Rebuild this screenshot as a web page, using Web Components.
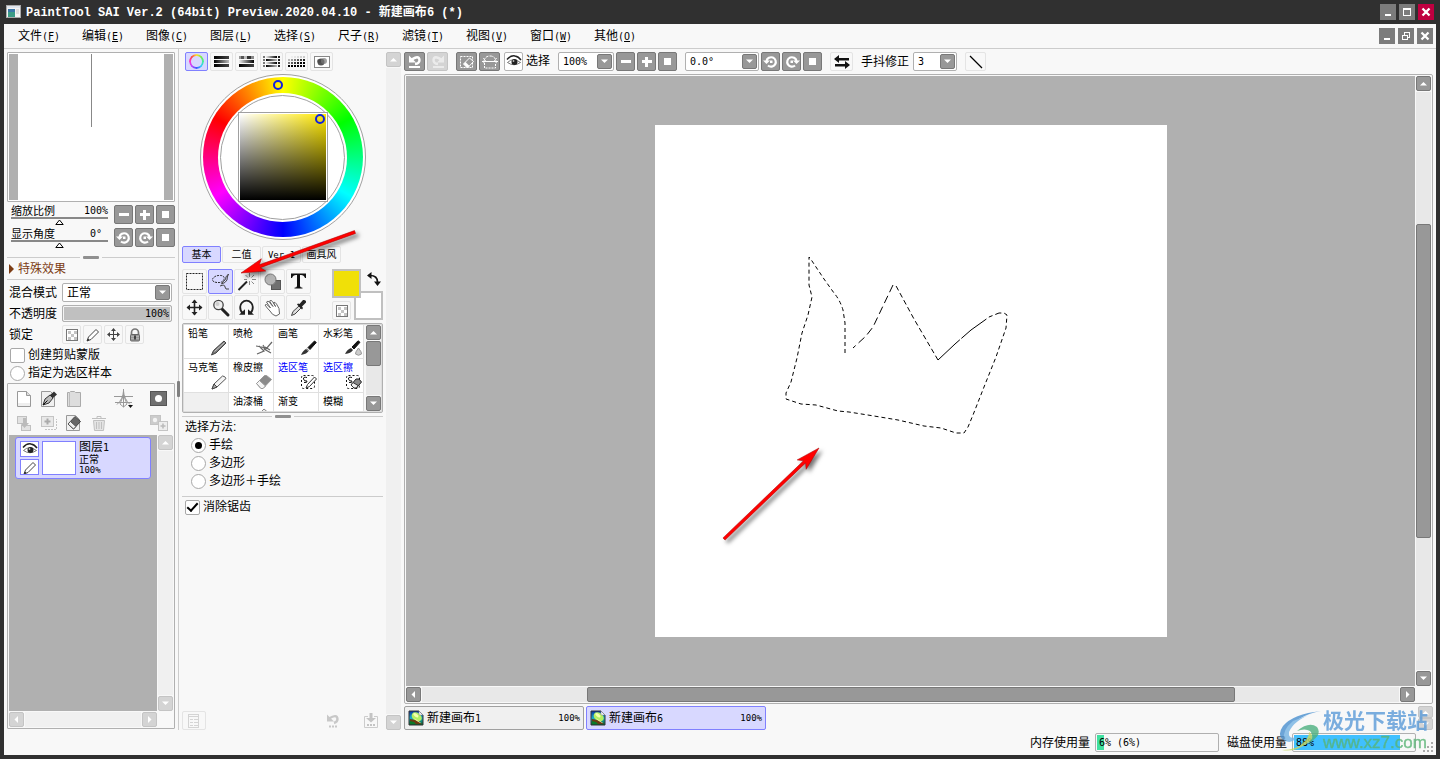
<!DOCTYPE html>
<html lang="zh-CN">
<head>
<meta charset="utf-8">
<title>PaintTool SAI</title>
<style>
html,body{margin:0;height:100%}
body{background:#303030;color:#000;font:12px/18px "Liberation Sans","Noto Sans CJK SC",sans-serif;overflow:hidden}
</style>
</head>
<body>
<sai-window>
  <sai-menu slot="menu"></sai-menu>
  <sai-left slot="left"></sai-left>
  <sai-tools slot="tools"></sai-tools>
  <sai-workspace slot="work"></sai-workspace>
  <sai-status slot="status"></sai-status>
</sai-window>
<script>
const BASE = `
*{box-sizing:border-box}
button,input,select{font:inherit;color:inherit;margin:0;padding:0}
button{background:none;border:0}
.n{font-family:"DejaVu Sans Mono",monospace;font-size:10px}
.s{font-family:"DejaVu Sans Mono",monospace;font-size:9px}
.opt{display:flex;align-items:center;gap:3px;height:18px;white-space:nowrap}
.opt input{appearance:none;width:15px;height:15px;border:1px solid #a8a8a8;background:#fff;display:grid;place-items:center;border-radius:2px}
.opt input[type=radio]{border-radius:50%}
.opt input[type=radio]:checked::after{content:"";width:7px;height:7px;border-radius:50%;background:#000}
.opt input[type=checkbox]:checked::after{content:"";width:9px;height:4px;border:solid #000;border-width:0 0 2px 2px;transform:rotate(-48deg);margin-bottom:3px}
`;
function define(name, css, view){
  customElements.define(name, class extends HTMLElement{
    constructor(){ super(); this.attachShadow({mode:'open'}); }
    connectedCallback(){
      this.shadowRoot.innerHTML = `<style>${BASE}${css}</style>` + view(this);
    }
  });
}
const rects = (list, fill) => list.map(([x,y,w,h]) => `<rect x="${x}" y="${y}" width="${w}" height="${h}" fill="${fill}"/>`).join('');
const dots = (op) => { let s=''; for(let r=0;r<4;r++) for(let c=0;c<6;c++) s+=`<rect x="${c*3}" y="${r*3+1}" width="2" height="2" fill="#000" opacity="${op(r,c)}"/>`; return s; };
const grad = '<defs><linearGradient id="a"><stop stop-color="#000"/><stop offset="1" stop-color="#444"/></linearGradient><linearGradient id="b"><stop stop-color="#000"/><stop offset="1" stop-color="#bbb"/></linearGradient><linearGradient id="c"><stop stop-color="#eee"/><stop offset="1" stop-color="#000"/></linearGradient></defs>';
const checker = '<g shape-rendering="crispEdges"><rect x="2.5" y="2.5" width="11" height="11" fill="#fff" stroke="#777"/><path d="M4 4h3v3H4zM10 4h3v3h-3zM7 7h3v3H7zM4 10h3v3H4zM10 10h3v3h-3z" fill="#c4c4c4"/></g>';
const pen = (c='#fff') => `<path d="M2 14l1.5-4L11 2.500l2.500 2.500L6 12.500z" fill="${c}" stroke="#444"/><path d="M2 14l1-2.500 1.500 1.500z" fill="#222"/>`;
const eye = '<path d="M1 5.500Q5 1 9 2Q12.500 2.500 15 6" fill="none" stroke="#222" stroke-width="1.500"/><path d="M1.500 8.500Q7 3 14.500 8.500Q8 13 1.500 8.500z" fill="#fff" stroke="#555" stroke-width=".8"/><circle cx="8.500" cy="8" r="3" fill="#222"/><circle cx="7.500" cy="7" r=".9" fill="#bbb"/>';
const sel = '<rect x="1.500" y="1.500" width="13" height="13" rx="2" fill="none" stroke="#111" stroke-dasharray="2 2"/><path d="M7 3.500Q3 2.500 3.500 5T7 7Q7.500 9 4 8.500" fill="none" stroke="#111"/>';
const thumb = '<defs><linearGradient id="s" x2="0" y2="1"><stop stop-color="#0a2aa0"/><stop offset=".5" stop-color="#19aecb"/><stop offset="1" stop-color="#0a5d20"/></linearGradient></defs><path d="M1 1h10l4 4v10H1z" fill="url(#s)" stroke="#333"/><ellipse cx="8.500" cy="6.500" rx="5.500" ry="4" transform="rotate(35 8 7)" fill="#b4ef62"/><ellipse cx="7.500" cy="5.500" rx="3" ry="1.500" transform="rotate(35 8 6)" fill="#f4ffb0"/><path d="M6 8l7 5-2 1z" fill="#fff5b0"/><path d="M2 9l5 1 7 4H2z" fill="#6a3a12"/><path d="M2 11l4 1 2 2H2z" fill="#0a7a28"/><path d="M11 1v4h4z" fill="#eef" stroke="#888" stroke-width=".5"/>';
const page = (f='#fff') => `<path d="M1.500.5h9l4 4v11h-13z" fill="${f}" stroke="#999"/>`;
const ICONS = {
  minus:[16,16,rects([[3,6,10,3]],'#fff')],
  plus:[16,16,rects([[3,6,10,3],[6,3,3,10]],'#fff')],
  stop:[16,16,rects([[4,4,7,7]],'#fff')],
  ccw:[16,16,'<path d="M3.500 7A4.700 4.700 0 1 1 5 11.500" fill="none" stroke="#fff" stroke-width="2.200"/><path d="M0 6.500h7L3.500 10z" fill="#fff"/><rect x="7" y="6.500" width="2.500" height="2.500" fill="#fff"/>'],
  cw:[16,16,'<path d="M12.500 7A4.700 4.700 0 1 0 11 11.500" fill="none" stroke="#fff" stroke-width="2.200"/><path d="M9 6.500h7L12.500 10z" fill="#fff"/><rect x="6.500" y="6.500" width="2.500" height="2.500" fill="#fff"/>'],
  undo:[16,16,'<path d="M4 6Q12 .5 12.500 6Q12.500 9.500 8 10" fill="none" stroke="#fff" stroke-width="2.400"/><path d="M2 1.500v7h7z" fill="#fff"/><path d="M2 13h11" stroke="#fff" stroke-width="2"/>'],
  redo:[16,16,'<g opacity=".55"><path d="M12 6Q4 .5 3.500 6Q3.500 9.500 8 10" fill="none" stroke="#fff" stroke-width="2.400"/><path d="M14 1.500v7H7z" fill="#fff"/><path d="M3 13h11" stroke="#fff" stroke-width="2"/></g>'],
  desel:[16,16,'<rect x="1.500" y="2.500" width="12" height="11" fill="none" stroke="#fff" stroke-dasharray="2 1"/><path d="M4.500 10l6-6 4 3.500-6 6.500z" fill="#989898" stroke="#fff"/><path d="M4.500 10l2-2 4 4-2 2z" fill="#fff"/>'],
  invsel:[16,16,'<path d="M2 7Q3 2 8 2T14 7" fill="none" stroke="#fff" stroke-dasharray="3 1"/><path d="M0 7.500h16" stroke="#fff"/><path d="M2.500 9v5h11V9" fill="none" stroke="#fff" stroke-dasharray="2 1"/><path d="M1 4l3 3-3 2M15 4l-3 3 3 2" fill="none" stroke="#fff" stroke-width=".7"/>'],
  eye:[16,16,eye],
  swap:[16,16,'<path d="M0 5l5-4v3h10v2.500H5V9zM16 11l-5-4v3H1v2.500h10V15z" fill="#111"/>'],
  line:[16,16,'<path d="M2 2l12 12" stroke="#000" stroke-width="1.200"/>'],
  up:[9,5,'<path d="M1 4.500L4.500 1 8 4.500z" fill="#fff"/>'],
  down:[9,5,'<path d="M1 .5L4.500 4 8 .5z" fill="#fff"/>'],
  left:[5,9,'<path d="M4 1L.5 4.500 4 8z" fill="#fff"/>'],
  right:[5,9,'<path d="M1 1l3.500 3.500L1 8z" fill="#fff"/>'],
  min:[16,16,rects([[5,10,6,2]],'#fff')],
  max:[16,16,'<g shape-rendering="crispEdges"><rect x="4.500" y="4.500" width="7" height="7" fill="none" stroke="#fff"/><rect x="4" y="4" width="8" height="2" fill="#fff"/></g>'],
  restore:[16,16,'<g shape-rendering="crispEdges" fill="none" stroke="#fff"><path d="M6.500 7V4.500h5v5H9"/><path d="M4.500 7.500h5v4h-5z"/><path d="M4 7.500h6M6 4.500h6"/></g>'],
  close:[16,16,'<path d="M4.500 4.500l7 7M11.500 4.500l-7 7" stroke="#fff" stroke-width="2.300"/>'],
  app:[16,14,'<rect x=".5" y=".5" width="14" height="12" fill="#f4f4f4" stroke="#aaa"/><rect x="1" y="1" width="13" height="2" fill="#dfe6ee"/><rect x="2" y="4" width="7" height="8" fill="#3c9c86"/><path d="M2 4h7v3H2z" fill="#3a78a8"/><rect x="10" y="4" width="3" height="5" fill="#ddd"/>'],
  bars:[16,12,grad+'<rect width="15" height="3" fill="url(#a)"/><rect y="4" width="15" height="3" fill="url(#b)"/><rect y="8" width="15" height="3" fill="url(#a)"/>'],
  mixbars:[16,12,grad+'<rect width="2" height="3" fill="#999"/><rect x="2" width="3" height="3" fill="#555"/><rect x="5" width="3" height="3" fill="#bbb"/><rect x="8" width="4" height="3" fill="#333"/><rect x="12" width="3" height="3" fill="#888"/><rect y="4" width="15" height="3" fill="url(#c)"/><rect y="8" width="15" height="3" fill="url(#a)"/>'],
  dotbars:[18,12,grad+[0,3,6,9].map(y=>`<rect y="${y}" width="2" height="2" fill="#777"/><rect x="3" y="${y}" width="11" height="2" fill="url(#${y%6?'b':'c'})"/><rect x="15" y="${y}" width="2" height="2" fill="#222"/>`).join('')],
  dots:[18,13,dots((r,c)=>Math.min(1,(r*2+c*(r?1:.3)+(r==3?5:0))/8))],
  pad:[16,14,'<rect x=".5" y="1.500" width="15" height="11" fill="#fff" stroke="#888"/><circle cx="7" cy="7" r="3.500" fill="#555"/><circle cx="10" cy="6" r="3" fill="#777" opacity=".7"/><circle cx="5" cy="6" r="2" fill="#444" opacity=".6"/>'],
  marquee:[20,20,'<rect x="1.500" y="1.500" width="16" height="16" fill="none" stroke="#222" stroke-dasharray="2 1"/>'],
  lasso:[20,20,'<path d="M6 10.500Q1 10 1.500 7Q4 3 10 3.500Q14 4 13 7.500Q11 11 7 10.500" fill="none" stroke="#222" stroke-dasharray="2 1"/><path d="M17.500 2Q14 5 14.500 7.500Q12 9.500 10.500 12Q14.500 11 16 8Q16 5 17.500 2M9 14Q14 12 14 15T18 17" fill="none" stroke="#444"/>'],
  wand:[20,20,'<path d="M1.500 18L10 9.500" stroke="#222" stroke-width="2"/><path d="M12.500 1v4M12.500 9v4M7 7.500h3M15 7.500h4M8.500 3l2.500 2.500M17 3L14.500 5.500M17 12L14.500 9.500" stroke="#888"/>'],
  shapes:[20,20,'<rect x="8.500" y="8.500" width="9" height="9" fill="#707070" stroke="#555"/><circle cx="7.500" cy="7.500" r="5.500" fill="#b4b4b4" stroke="#777"/>'],
  type:[20,20,'<path d="M2 1.500h15V6h-1Q15 3 12 3h-1v11q0 1.500 2.500 1.800v.7H5.500v-.7q2.500-.3 2.500-1.800V3H7Q4 3 3 6H2z" fill="#111"/>'],
  move:[19,19,'<path d="M9.500 2.500v14M2.500 9.500h14" stroke="#222" stroke-width="1.600"/><path d="M9.500 1.500l3 3.500h-6zM9.500 17.500l3-3.500h-6zM1.500 9.500L5 6.500v6zM17.500 9.500L14 6.500v6z" fill="#222"/>'],
  zoom:[20,20,'<path d="M11 11l6 6" stroke="#222" stroke-width="3" stroke-linecap="round"/><circle cx="7.500" cy="7" r="4.700" fill="#eee" stroke="#444" stroke-width="1.300"/><circle cx="6.500" cy="6" r="2" fill="#ccc"/>'],
  rotate:[20,20,'<path d="M6 15.500Q3 13 3.200 9A6.300 6.300 0 0 1 15.800 9Q16 13 13 15.500" fill="none" stroke="#222" stroke-width="1.800"/><path d="M2 16.800h6v-5.500zM17 16.800h-6v-5.500z" fill="#222"/>'],
  hand:[20,20,'<path d="M7 13Q4 10 2 7Q3.500 5.500 5.500 8L7.500 10L3.500 4Q5 2 6.500 4.500L10 8.500L6.500 3Q8 1.500 9.500 3.500L12.500 8.500L10.500 4.500Q12 3.500 13.500 6Q17 10 16.500 16L13 18Q9 17 7 13z" fill="#fff" stroke="#666"/>'],
  picker:[20,20,'<path d="M2.500 17.500l1.500-4 6-5.500 2 2-6 6z" fill="#ddd" stroke="#444"/><path d="M8 6.500l5 5 1-1.500-1-1.500 4-4q.5-3-3-2.500L10.500 6 9 5.500z" fill="#222"/>'],
  swapc:[16,16,'<path d="M4 4.500Q11.500 4.500 11.500 11" fill="none" stroke="#111" stroke-width="1.700"/><path d="M1 4.500L5.500 1v7zM11.500 15L8 10.500h7z" fill="#111"/>'],
  checker:[16,16,checker],
  pencilline:[16,16,pen()],
  movesm:[15,15,'<path d="M7.500 2v11M2 7.500h11" stroke="#444"/><path d="M7.500 1l2.500 3H5zM7.500 14l2.500-3H5zM1 7.500L4 5v5zM14 7.500L11 5v5z" fill="#444"/>'],
  lock:[16,16,'<path d="M4.500 8V5.500a3.500 3.500 0 0 1 7 0V8" fill="none" stroke="#777" stroke-width="1.700"/><rect x="3.500" y="7.500" width="9" height="6.500" rx="1" fill="#999" stroke="#666"/><path d="M4 9.500h8M4 11.500h8" stroke="#bbb" stroke-width=".7"/><path d="M8 8.500v4" stroke="#222" stroke-width="1.500"/>'],
  newlayer:[16,16,page()+'<path d="M10.500.5v4h4" fill="#ddd" stroke="#999"/><path d="M2 12h12v3H2z" fill="#ddd" opacity=".5"/>'],
  penlayer:[18,16,page('#f0f0f0')+'<path d="M3 14l2-6 5-4 3 3-4 5z" fill="#bbb" stroke="#333"/><path d="M3 14l4.500-4.500" stroke="#111"/><path d="M10 4l4-3.500 3 3-4 3.500z" fill="#333"/>'],
  folder:[16,16,'<path d="M1.500 1.500h2l1-1h4l1 1h5v14h-13z" fill="#ddd" stroke="#aaa"/><path d="M3.500 2v13" stroke="#bbb"/>'],
  ruler:[20,20,'<path d="M9.500 0v18M0 7.500h19M1 13.500h17M3 15.500Q9 10 9.500 2Q10 10 16 15.500M6 15l3.500-9 3.500 9-3.500 3z" fill="none" stroke="#999"/><path d="M14 16h5l-2.500 3z" fill="#111"/>'],
  mask:[18,16,'<rect x=".5" y=".5" width="16" height="14" fill="#707070" stroke="#555"/><circle cx="8.500" cy="7.500" r="3.500" fill="#fff"/>'],
  merge:[16,16,'<g fill="#e2e2e2" stroke="#c0c0c0"><rect x="1.500" y="1.500" width="9" height="7"/><rect x="5.500" y="10.500" width="9" height="5"/></g><path d="M7 3h3v5h3L8.500 13 4 8h3z" fill="#bbb"/>'],
  stamp:[18,16,'<g fill="none" stroke="#c4c4c4"><path d="M5 14.500h11.500V4" stroke-dasharray="2 1"/><rect x="1.500" y="1.500" width="12" height="10" fill="#e8e8e8"/></g><path d="M7.500 3.500v6M4.500 6.500h6" stroke="#aaa" stroke-width="2"/>'],
  clear:[18,16,page('#f0f0f0')+'<path d="M3 9l7-7.500 5.500 5-7 7.500z" fill="#666" stroke="#444"/><path d="M3 9l2.500-2.500 5.500 5-2.500 2.500z" fill="#eee" stroke="#555"/>'],
  trash:[16,16,'<path d="M2.500 5.500h11l-1 10h-9z" fill="#e4e4e4" stroke="#c0c0c0"/><path d="M1 3.500h14M6 3V1.500h4V3M5.500 7v7M8 7v7M10.500 7v7" fill="none" stroke="#c0c0c0"/>'],
  maskadd:[20,16,'<rect x="1.500" y=".5" width="10" height="9" fill="#ccc" stroke="#c4c4c4"/><circle cx="6" cy="5" r="2.200" fill="#f4f4f4"/><rect x="9.500" y="6.500" width="9" height="9" fill="#eee" stroke="#c4c4c4"/><path d="M14 8.500v5M11.500 11h5" stroke="#bbb" stroke-width="1.600"/>'],
  b_pencil:[18,16,'<path d="M1.500 15l2-4.500L14 1l2 2L6 13z" fill="#777" stroke="#444"/><path d="M4.500 11.500L14.500 2.500" stroke="#ccc"/>'],
  b_air:[18,16,'<path d="M1 6l6 1 4 2 6-7M9 9l7 4M4 6l5 5-7 3M10 7l5 3M8 5l3 5" fill="none" stroke="#666" stroke-width="1.200"/>'],
  b_brush:[18,16,'<path d="M8 7.500L14.500 1l1.800 1.500L10 9.500z" fill="#111" stroke="#111"/><path d="M1 15Q3 10 7 8.500l2 2Q7 14 1 15z" fill="#333"/><path d="M6.500 9l2.500 2.500" stroke="#ccc"/>'],
  b_water:[18,16,'<path d="M7 7L13 .8l2 1.500L9 9z" fill="#111" stroke="#111"/><path d="M0 14Q2 9.500 6 8l2 2Q6 13.500 0 14z" fill="#333"/><path d="M13.500 8Q10 12.500 10.500 14Q13.500 16.500 16.500 14Q17 12.500 13.500 8z" fill="#ccc" stroke="#999"/>'],
  b_marker:[18,16,'<path d="M2 15l2-5L12.500 2q2.500 0 3.500 2.500L7 13z" fill="#f4f4f4" stroke="#555"/><path d="M2 15l2-5 3 3z" fill="#aaa" stroke="#444"/>'],
  b_eraser:[18,16,'<path d="M1.500 9.500l8-8h2l5 4-8.500 9H6z" fill="#8a8a8a" stroke="#999"/><path d="M1.500 9.500l3-3 6 5.500-2.500 2.500H6z" fill="#f4f4f4" stroke="#999"/>'],
  b_selpen:[18,16,sel+'<path d="M6 14l1.500-3.500L14.500 3l2 2-7 7.500z" fill="#fff" stroke="#333"/>'],
  b_seler:[18,16,sel+'<path d="M6 11l5-6h3l2.500 3-5 6H9z" fill="#888" stroke="#222"/><path d="M6 11l2-2.500 5 3L11.500 14H9z" fill="#eee" stroke="#333"/>'],
  b_bucket:[18,16,'<path d="M9 1l7 6-7 6-6-6z" fill="#eee" stroke="#888"/>'],
  b_dot:[18,16,'<path d="M12 3v3" stroke="#aaa"/>'],
  list:[18,16,'<g fill="none" stroke="#d4d4d4"><rect x="3.500" y="1.500" width="10" height="13"/><path d="M3 3.500h11M5 6.500h3M9 6.500h4M5 9.500h3M9 9.500h4M5 12.500h3M9 12.500h4"/></g>'],
  undodots:[16,16,'<path d="M4 5.500Q12 .5 12.500 6Q12.500 9 9 10" fill="none" stroke="#c8c8c8" stroke-width="2.400"/><path d="M2 1.500v7h7zM4 12.500h2v2H4zM7 12.500h2v2H7zM10 12.500h2v2h-2z" fill="#c8c8c8"/>'],
  savedots:[16,16,'<path d="M5 3.500H1.500v11h13v-11H11" fill="none" stroke="#ccc"/><path d="M6.500 0h3v5H13L8 9.500 3 5h3.500zM4 11h2v2H4zM7 11h2v2H7zM10 11h2v2h-2z" fill="#c4c4c4"/>'],
  thumb:[16,16,thumb]
};

define('sai-icon', ':host{display:inline-flex}svg,i{display:block}i{width:15px;height:15px;border-radius:50%;background:conic-gradient(#fd3,#7e4,#4e9,#3cf,#45f,#b4f,#f3c,#f44,#fd3);-webkit-mask:radial-gradient(circle,#0000 5px,#000 6px)}', el => {
  const name = el.getAttribute('name');
  if(name === 'wheel') return '<i></i>';
  const [w,h,body] = ICONS[name];
  return `<svg width="${w}" height="${h}" viewBox="0 0 ${w} ${h}" aria-hidden="true">${body}</svg>`;
});

define('sai-button', `
:host{display:block;width:var(--w,19px);height:var(--h,19px);flex:none}
button{width:100%;height:100%;display:grid;place-items:center;border-radius:2px;border:1px solid #e4e4e4;background:#f8f8f8;font-size:10px;line-height:12px;overflow:hidden;white-space:nowrap}
:host([kind=dark]) button{background:#989898;border:1px solid #787878}
:host([kind=pale]) button{background:#d4d4d4;border-color:#c4c4c4}
:host([kind=on]) button{background:#d8d8ff;border:1px solid #8080ff}
:host([kind=line]) button{background:#fff;border-color:#b4b4b4}
:host([kind=blue]) button{background:#fff;border-color:#8080ff;border-radius:0}
:host([kind=bare]) button{border:0;background:none}
:host([kind=win]) button{border:0;border-radius:0;background:#7c7c7c}
:host([kind=red]) button{border:0;border-radius:0;background:#c00040}
`, el => `<button type="button" aria-label="${el.getAttribute('label')||el.getAttribute('icon')||''}">${el.hasAttribute('icon')?`<sai-icon name="${el.getAttribute('icon')}"></sai-icon>`:'<span><slot></slot></span>'}</button>`);

define('sai-select', `
:host{display:flex;align-items:center}
label{flex:none;width:var(--lw,auto);white-space:nowrap}
.box{position:relative;flex:1;width:var(--bw,auto);height:19px}
select{appearance:none;width:100%;height:19px;border:1px solid #b0b0b0;border-radius:2px;background:#fff;padding:0 18px 0 4px;display:block;outline:0}
.b{position:absolute;right:2px;top:2px;width:15px;height:15px;background:#989898;border:1px solid #787878;border-radius:2px;display:grid;place-items:center;pointer-events:none}
`, el => `<label for="s"><slot></slot></label><div class="box"><select id="s" class="${el.getAttribute('face')||''}" aria-label="${el.getAttribute('label')||el.textContent}"><option>${el.getAttribute('value')}</option></select><span class="b"><sai-icon name="down"></sai-icon></span></div>`);

define('sai-scroll', `
:host{display:flex;min-width:0;min-height:0;gap:1px}
:host([dir=v]){flex-direction:column;width:15px}
:host([dir=h]){height:15px}
.t{flex:1;display:flex;flex-direction:inherit;background:#e8e8e8;min-width:0;min-height:0}
:host([pale]) .t{background:#f0f0f0}
.t b{background:#989898;border:1px solid #787878;border-radius:2px}
sai-button{--w:15px;--h:15px}
`, el => {
  const v = el.getAttribute('dir') === 'v', k = el.hasAttribute('pale') ? 'pale' : 'dark';
  const p = (el.getAttribute('parts')||'').split(' ');
  const body = p.length === 3 ? `<span style="flex:${p[0]}"></span><b style="flex:${p[1]}"></b><span style="flex:${p[2]}"></span>` : '';
  return `<sai-button kind="${k}" icon="${v?'up':'left'}"></sai-button><div class="t">${body}</div><sai-button kind="${k}" icon="${v?'down':'right'}"></sai-button>`;
});

define('sai-divider', `
:host{display:flex;align-items:center;gap:3px;height:3px}
span{flex:1;height:1px;background:#ccc}
b{width:16px;height:3px;border-radius:1px;background:#909090}
:host([plain]){height:1px}
`, el => el.hasAttribute('plain') ? '<span></span>' : '<span></span><b></b><span></span>');

define('sai-slider', `
:host{display:block;width:97px;height:19px;font-size:11px;line-height:12px}
.r{display:flex;justify-content:space-between;height:12px}
output{padding-right:var(--pr,0)}
input{display:block;appearance:none;width:100%;height:8px;background:none}
input::-webkit-slider-runnable-track{height:8px;background:linear-gradient(#888 2px,transparent 2px)}
input::-webkit-slider-thumb{appearance:none;width:9px;height:6px;margin-top:2px;background:url("data:image/svg+xml,%3Csvg xmlns='http://www.w3.org/2000/svg' width='9' height='6'%3E%3Cpath d='M.8 5.500L4.500 1l3.700 4.500z' fill='white' stroke='black'/%3E%3C/svg%3E")}
`, el => `<div class="r"><label for="r"><slot></slot></label><output class="n">${el.getAttribute('value')}</output></div><input id="r" type="range" value="50">`);

define('sai-window', `
:host{display:flex;flex-direction:column;height:100vh;background:#303030;padding:0 4px 4px;box-sizing:border-box}
header{flex:none;height:24px;display:flex;align-items:center;gap:3px;padding:0 2px;color:#fff;font-weight:bold}
h1{margin:0;flex:1;font-size:12px;line-height:24px;padding-left:1px;white-space:nowrap}
h1 span{font-family:"Liberation Mono",monospace}
sai-button{--w:16px;--h:16px}
main{flex:1;display:flex;flex-direction:column;background:#f8f8f8;min-height:0}
.body{flex:1;display:flex;min-height:0}
`, () => `<header><sai-icon name="app"></sai-icon><h1><span>PaintTool SAI Ver.2 (64bit) Preview.2020.04.10 - </span>新建画布<span>6 (*)</span></h1>
<sai-button kind="win" icon="min"></sai-button><sai-button kind="win" icon="max"></sai-button><sai-button kind="red" icon="close"></sai-button></header>
<main><slot name="menu"></slot><div class="body"><slot name="left"></slot><slot name="tools"></slot><slot name="work"></slot></div><slot name="status"></slot></main>`);

define('sai-menu', `
:host{display:flex;flex:none;box-sizing:border-box;height:25px;border-bottom:1px solid #ccc;align-items:center;padding:0 3px 0 14px}
nav{flex:1;display:flex;gap:22px}
nav button{white-space:nowrap;width:42px;line-height:24px;padding-top:1px}
div{display:flex;gap:3px}
sai-button{--w:16px;--h:16px}
`, () => '<nav>' + [['文件','F'],['编辑','E'],['图像','C'],['图层','L'],['选择','S'],['尺子','R'],['滤镜','T'],['视图','V'],['窗口','W'],['其他','O']].map(([t,k])=>`<button type="button">${t}<span class="n">(<u>${k}</u>)</span></button>`).join('') + '</nav><div><sai-button kind="win" icon="min"></sai-button><sai-button kind="win" icon="restore"></sai-button><sai-button kind="win" icon="close"></sai-button></div>');

define('sai-left', `
:host{position:relative;flex:none;display:flex;flex-direction:column;width:175px;box-sizing:border-box;padding:3px 3px 1px;border-right:1px solid #ccc}
.grip{position:absolute;right:-2px;top:332px;width:3px;height:16px;border-radius:1px;background:#808080}
.nav{height:150px;flex:none;border:1px solid #b0b0b0;border-radius:1px;padding:1px;background:#fff}
.nav div{height:100%;border:solid #b0b0b0;border-width:0 9px;background:linear-gradient(#888,#888) 73px 0/1px 73px no-repeat #fff}
.zoom{display:flex;justify-content:space-between;padding-left:4px;margin-top:4px}
.zoom:first-of-type{margin-top:3px}
.btns{display:flex;gap:2px}
.hd{height:20px;line-height:19px;color:#7c3c14;display:flex;align-items:center;gap:4px;padding-left:2px}
.hd::before{content:"";border-left:5px solid #7c3c14;border-top:5px solid transparent;border-bottom:5px solid transparent}
.form{padding:3px 3px 0 2px;display:grid;gap:3px}
sai-select{--lw:53px}
.op{display:flex;height:17px;align-items:center}
.op>label,.lock>span{width:53px;white-space:nowrap}
.op div{position:relative;flex:1;height:17px}
.op input{appearance:none;display:block;width:100%;height:17px;border:1px solid #b0b0b0;border-radius:2px;background:#c0c0c0;box-shadow:inset 0 0 0 1px #f4f4f4}
.op input::-webkit-slider-thumb{appearance:none;width:1px;height:1px}
.op output{position:absolute;right:3px;top:0;line-height:17px}
.lock{display:flex;align-items:center}
.lock div{display:flex;gap:2px}
.checks{padding:2px 0 1px 3px}
.layers{flex:1;min-height:0;display:flex;flex-direction:column;border:1px solid #b0b0b0;border-radius:1px;padding:3px 1px 0}
.bar{display:grid;grid-template-columns:repeat(5,25px) 10px 25px;padding-left:2px;--w:25px;--h:24px}
.bar .e{grid-column:7}
.list{flex:1;min-height:0;display:grid;grid-template:minmax(0,1fr) 15px/minmax(0,1fr) 15px;gap:1px;padding-bottom:1px}
.items{background:#b0b0b0;padding:2px 6px}
.layer{height:42px;border:1px solid #8080ff;border-radius:3px;background:#d8d8ff;display:flex;gap:3px;padding:3px 4px}
.vis{display:grid;gap:2px;--h:16px}
.th{width:34px;height:34px;border:1px solid #8080ff;background:#fff}
.tx{line-height:11px;font-size:10px}
.tx div:first-child{font-size:12px;line-height:12px}
`, () => `<span class="grip"></span><div class="nav"><div></div></div>
<section class="zoom"><sai-slider value="100%">缩放比例</sai-slider><span class="btns"><sai-button kind="dark" icon="minus"></sai-button><sai-button kind="dark" icon="plus"></sai-button><sai-button kind="dark" icon="stop"></sai-button></span></section>
<section class="zoom"><sai-slider value="0°" style="--pr:6px">显示角度</sai-slider><span class="btns"><sai-button kind="dark" icon="ccw"></sai-button><sai-button kind="dark" icon="cw"></sai-button><sai-button kind="dark" icon="stop"></sai-button></span></section>
<sai-divider style="margin-top:9px"></sai-divider>
<div class="hd">特殊效果</div><sai-divider plain></sai-divider>
<div class="form"><sai-select value="正常">混合模式</sai-select>
<div class="op"><label for="op">不透明度</label><div><input id="op" type="range" value="100"><output class="n">100%</output></div></div>
<div class="lock"><span>锁定</span><div><sai-button icon="checker"></sai-button><sai-button icon="pencilline"></sai-button><sai-button icon="movesm"></sai-button><sai-button icon="lock"></sai-button></div></div></div>
<div class="checks"><label class="opt"><input type="checkbox">创建剪贴蒙版</label><label class="opt"><input type="radio">指定为选区样本</label></div>
<section class="layers"><div class="bar"><sai-button kind="bare" icon="newlayer"></sai-button><sai-button kind="bare" icon="penlayer"></sai-button><sai-button kind="bare" icon="folder"></sai-button><span></span><sai-button kind="bare" icon="ruler"></sai-button><sai-button class="e" kind="bare" icon="mask"></sai-button>
<sai-button kind="bare" icon="merge"></sai-button><sai-button kind="bare" icon="stamp"></sai-button><sai-button kind="bare" icon="clear"></sai-button><sai-button kind="bare" icon="trash"></sai-button><sai-button class="e" kind="bare" icon="maskadd"></sai-button></div>
<div class="list"><div class="items"><div class="layer"><div class="vis"><sai-button kind="blue" icon="eye"></sai-button><sai-button kind="blue" icon="pencilline"></sai-button></div><div class="th"></div><div class="tx"><div>图层<span class="n">1</span></div><div>正常</div><div class="s">100%</div></div></div></div>
<sai-scroll dir="v" pale></sai-scroll><sai-scroll dir="h" pale></sai-scroll></div></section>`);

define('sai-color-wheel', `
:host{display:grid;place-items:center;height:166px}
.o{position:relative;width:166px;height:166px;border-radius:50%;border:1px solid #a0a0a0;background:#fff;display:grid;place-items:center}
.h{width:160px;height:160px;border-radius:50%;background:conic-gradient(#ff0,#0f0 60deg,#0ff 120deg,#00f 180deg,#f0f 240deg,#f00 300deg,#ff0);display:grid;place-items:center}
.w{width:129px;height:129px;border-radius:50%;background:#fff;display:grid;place-items:center}
.i{width:125px;height:125px;border-radius:50%;border:1px solid #a0a0a0;display:grid;place-items:center}
.q{width:90px;height:90px;border:1px solid #a0a0a0;padding:1px;background:#fff}
.q div{height:100%;background:linear-gradient(transparent,#000),linear-gradient(90deg,#fff,#ffe800)}
b{position:absolute;width:10px;height:10px;border:2px solid #1020e0;border-radius:50%}
`, () => '<div class="o"><div class="h"><div class="w"><div class="i"><div class="q"><div></div></div></div></div></div><b style="left:72px;top:5px"></b><b style="left:114px;top:39px"></b></div>');

define('sai-arrow', ':host{position:absolute;pointer-events:none}svg{display:block;overflow:visible;filter:drop-shadow(3px 3px 2px rgba(0,0,0,.55))}',
 el => { const [w,h,x1,y1,x2,y2] = el.getAttribute('geo').split(' ').map(Number); const len = Math.hypot(x2-x1,y2-y1), a = Math.atan2(y2-y1,x2-x1)*180/Math.PI;
  return `<svg width="${w}" height="${h}"><g transform="translate(${x1} ${y1}) rotate(${a})"><path d="M0-1.500L${len-20}-1.500L${len-24}-6.500L${len} 0L${len-24} 6.500L${len-20} 1.500L0 1.500z" fill="#f00" stroke="#a00" stroke-width=".5"/></g></svg>`; });

const BRUSHES = [['铅笔','pencil'],['喷枪','air'],['画笔','brush'],['水彩笔','water'],['马克笔','marker'],['橡皮擦','eraser'],['选区笔','selpen',1],['选区擦','seler',1],['',''],['油漆桶','bucket'],['渐变','dot'],['模糊','dot']];
define('sai-tools', `
:host{position:relative;flex:none;display:flex;gap:3px;width:225px;box-sizing:border-box;padding:3px 3px 0}
.col{width:201px;display:flex;flex-direction:column}
.modes{display:flex;gap:2px;padding-left:3px;--w:23px}
sai-color-wheel{margin:3px 0 6px}
.tabs{display:flex;gap:1px;--w:39px;--h:17px}
.row{display:flex;justify-content:space-between;margin:6px 0 3px}
.grid{display:grid;grid-template-columns:repeat(5,25px);gap:1px;--w:25px;--h:25px}
.cols{display:grid;grid-template-columns:22px 29px;grid-template-rows:22px 29px;width:51px;height:51px}
.fg{grid-area:1/1;width:29px;height:29px;border:2px solid #c0c0c0;background:#f0e008;z-index:1}
.bg{grid-area:2/2;border:2px solid #c0c0c0;background:#fff}
.sw{grid-area:1/2;justify-self:end;--w:18px;--h:20px}
.ck{grid-area:2/1;align-self:end}
.brushes{height:90px;border:1px solid #b0b0b0;border-radius:2px;padding:1px;display:flex;gap:2px;overflow:hidden;box-shadow:inset 0 0 0 1px #ddd}
.cells{flex:1;display:grid;grid-template-columns:repeat(4,45px);grid-auto-rows:34px;height:86px;overflow:hidden}
.c{border:solid #e0e0e0;border-width:0 1px 1px 0;background:#fff;display:flex;flex-direction:column;padding:2px 0 0 4px;font-size:10px;line-height:13px;text-align:left;white-space:nowrap}
.c:empty{background:#f0f0f0}
.c.blue{color:#00f}
.c sai-icon{align-self:flex-end}
.set{padding:0 3px}
.radios{padding-left:6px}
.foot{margin-top:auto;display:flex;align-items:center;--w:24px;--h:19px}
.foot .u{margin-left:auto;margin-right:14px}
`, () => `<div class="col"><div class="modes"><sai-button kind="on" icon="wheel"></sai-button>${['bars','mixbars','dotbars','dots','pad'].map(i=>`<sai-button icon="${i}"></sai-button>`).join('')}</div>
<sai-color-wheel></sai-color-wheel>
<div class="tabs"><sai-button kind="on" label="基本">基本</sai-button><sai-button label="二值">二值</sai-button><sai-button label="Ver.1"><span style="font:9px 'DejaVu Sans Mono',monospace">Ver.1</span></sai-button><sai-button label="画具风">画具风</sai-button></div>
<div class="row"><div class="grid"><sai-button icon="marquee"></sai-button><sai-button kind="on" icon="lasso"></sai-button>${['wand','shapes','type','move','zoom','rotate','hand','picker'].map(i=>`<sai-button icon="${i}"></sai-button>`).join('')}</div>
<div class="cols"><span class="fg"></span><sai-button class="sw" kind="bare" icon="swapc"></sai-button><sai-button class="ck" icon="checker"></sai-button><span class="bg"></span></div></div>
<div class="brushes"><div class="cells">${BRUSHES.map(([t,i,b])=>`<button type="button" class="c${b?' blue':''}">${t?`<span>${t}</span><sai-icon name="b_${i}"></sai-icon>`:''}</button>`).join('')}</div><sai-scroll dir="v" parts="0 24 31"></sai-scroll></div>
<sai-divider style="margin-top:2px"></sai-divider>
<div class="set" role="radiogroup" aria-label="选择方法"><div>选择方法:</div><div class="radios"><label class="opt"><input type="radio" name="m" checked>手绘</label><label class="opt"><input type="radio" name="m">多边形</label><label class="opt"><input type="radio" name="m">多边形＋手绘</label></div></div>
<sai-divider plain style="margin:6px 0 1px"></sai-divider>
<div class="set"><label class="opt"><input type="checkbox" checked>消除锯齿</label></div>
<div class="foot"><sai-button icon="list"></sai-button><sai-button class="u" kind="bare" icon="undodots"></sai-button><sai-button kind="bare" icon="savedots"></sai-button></div></div>
<sai-scroll dir="v" pale></sai-scroll>
<sai-arrow style="left:61px;top:181px" geo="116 44 115 2 1 43"></sai-arrow>`);

define('sai-canvas', `
:host{display:grid;place-items:center;background:#b0b0b0;min-width:0;min-height:0;overflow:hidden}
div{position:relative;width:512px;height:512px;background:#fff}
svg{display:block}
`, () => `<div><svg width="512" height="512" fill="none" stroke="#000"><path stroke-dasharray="4 3" d="M190 228V198L188 185Q185 175 179 168L169 154L155 133L154 132V160L157 172L153 190L147 208L142 233L136 257L131 268V274L137 276L146 279L161 280L183 286L194 287L219 291L243 295L269 301L286 303L301 308H309L313 302L318 290L329 262L341 232L351 203L352 190L349 188L344 188"/><path d="M330 195L316 205L300 219L283 235" stroke-dasharray="30 2"/><path stroke-dasharray="4 3" d="M344 188L334 192L330 195"/><path stroke-dasharray="5 3" d="M283 235L259 194L240 159"/><path d="M238 160L218 202L211 211L198 223" stroke-dasharray="8 4"/></svg><sai-arrow style="left:69px;top:323px" geo="96 92 0 91 95 0"></sai-arrow></div>`);

define('sai-workspace', `
:host{flex:1;min-width:0;display:flex;flex-direction:column;padding-right:3px}
.bar{flex:none;height:25px;padding-top:3px;display:flex;align-items:flex-start;gap:2px;white-space:nowrap}
.bar .w{--w:21px}.g{margin-left:6px}
.frame{flex:1;min-height:0;border:1px solid #b0b0b0;border-radius:2px;padding:1px;display:grid;grid-template:minmax(0,1fr) 15px/minmax(0,1fr) 15px;gap:1px}
.tabs{flex:none;display:flex;gap:2px;margin-top:2px}
.tab{width:180px;height:24px;border:1px solid #a0a0a0;border-radius:2px;background:#f0f0f0;display:flex;align-items:center;gap:3px;padding:0 3px;text-align:left}
.tab.on{background:#d8d8ff;border-color:#8080ff}
.tab span:nth-of-type(1){flex:1}
.mini{margin-left:auto;display:grid;--w:15px;--h:12px}
`, () => `<div class="bar"><sai-button class="w" kind="dark" icon="undo"></sai-button><sai-button class="w" kind="pale" icon="redo"></sai-button><sai-button class="w g" kind="dark" icon="desel"></sai-button><sai-button class="w" kind="dark" icon="invsel"></sai-button><sai-button style="margin-left:2px" kind="line" icon="eye"></sai-button><span style="margin-left:1px">选择</span>
<sai-select class="g" face="n" label="缩放" value="100%" style="--bw:56px"></sai-select><sai-button kind="dark" icon="minus"></sai-button><sai-button kind="dark" icon="plus"></sai-button><sai-button kind="dark" icon="stop"></sai-button>
<sai-select class="g" face="n" label="角度" value="0.0°" style="--bw:74px"></sai-select><sai-button kind="dark" icon="ccw"></sai-button><sai-button kind="dark" icon="cw"></sai-button><sai-button kind="dark" icon="stop"></sai-button>
<sai-button class="g" icon="swap" style="--w:23px"></sai-button><sai-select class="g" face="n" value="3" style="--lw:52px;--bw:44px">手抖修正</sai-select><sai-button class="g w" icon="line"></sai-button></div>
<div class="frame"><sai-canvas></sai-canvas><sai-scroll dir="v" parts="132 314 132"></sai-scroll><sai-scroll dir="h" parts="165 648 165"></sai-scroll></div>
<div class="tabs"><button type="button" class="tab"><sai-icon name="thumb"></sai-icon><span>新建画布<span class="n">1</span></span><span class="s">100%</span></button><button type="button" class="tab on"><sai-icon name="thumb"></sai-icon><span>新建画布<span class="n">6</span></span><span class="s">100%</span></button><div class="mini"><sai-button kind="pale" icon="up"></sai-button><sai-button kind="pale" icon="down"></sai-button></div></div>`);

define('sai-watermark', `
:host{position:absolute;right:4px;bottom:2px;display:flex;align-items:center;gap:2px;opacity:.8;pointer-events:none}
div{width:109px;white-space:nowrap}
p{margin:0;font-size:21px;line-height:24px;font-weight:bold;color:#5b9bd8}
p+p{font:17px/20px "Liberation Sans",sans-serif;color:#58b474;-webkit-text-stroke:.4px #58b474}
`, () => `<svg width="42" height="42" viewBox="0 0 42 42"><path d="M42 1Q14 4 4 16Q-3 26 6 31Q5 19 20 9Q30 3 42 1z" fill="#4a90d0"/><path d="M35 3Q15 10 10 22Q9 30 18 27Q12 35 5 30Q3 20 14 11z" fill="#76b4e4"/><path d="M18 21Q30 11 38 17Q44 25 30 33Q35 24 31 21Q26 18 18 21z" fill="#4cb080"/><path d="M3 40Q18 40 25 32Q30 27 30 22Q39 28 24 36Q14 42 3 40z" fill="#c8d860"/></svg><div><p>极光下载站</p><p>www.xz7.com</p></div>`);

define('sai-status', `
:host{position:relative;flex:none;box-sizing:border-box;height:25px;display:flex;justify-content:flex-end;align-items:center;padding-right:20px;gap:8px}
.m{display:flex;align-items:center;gap:5px}
.b{width:124px;height:19px;border:1px solid #b0b0b0;border-radius:2px;padding:1px 1px 1px 3px;line-height:15px;background:linear-gradient(90deg,var(--c) var(--p),transparent var(--p)) 1px 1px/120px 15px no-repeat #f8f8f8}
.grip{position:absolute;right:3px;bottom:3px}
`, () => `<div class="m"><span>内存使用量</span><div class="b n" role="progressbar" aria-label="内存使用量" aria-valuenow="6" style="--c:#40e0a0;--p:6%">6% (6%)</div></div><div class="m"><span>磁盘使用量</span><div class="b n" role="progressbar" aria-label="磁盘使用量" aria-valuenow="88" style="--c:#40c0ff;--p:88%">88%</div></div>
<svg class="grip" width="10" height="10" fill="#aaa"><path d="M8 0h2v2H8zM4 4h2v2H4zM8 4h2v2H8zM0 8h2v2H0zM4 8h2v2H4zM8 8h2v2H8z"/></svg><sai-watermark></sai-watermark>`);
</script>
</body>
</html>
